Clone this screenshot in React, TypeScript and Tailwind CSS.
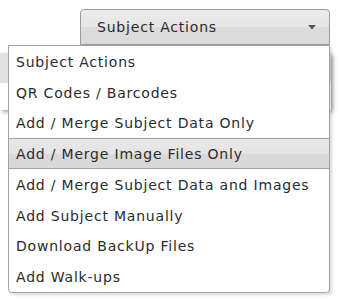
import React from "react";

const items = [
  "Subject Actions",
  "QR Codes / Barcodes",
  "Add / Merge Subject Data Only",
  "Add / Merge Image Files Only",
  "Add / Merge Subject Data and Images",
  "Add Subject Manually",
  "Download BackUp Files",
  "Add Walk-ups",
];

export default function App() {
  return (
    <div
      className="relative w-[341px] h-[301px] bg-white overflow-hidden text-[14px] tracking-[0.8px] text-[#2b2b2b]"
      style={{ fontFamily: '"DejaVu Sans", Verdana, sans-serif' }}
    >
      {/* element behind the menu */}
      <div className="absolute left-0 top-[53px] w-[331px] h-[57px] shadow-[2px_2px_4px_rgba(0,0,0,0.35)] bg-white">
        <div className="h-[30px] bg-[#e2e2e2]" />
      </div>

      <div className="relative pt-[9px] pl-[8px] w-[330px] flex flex-col items-end">
        <button className="w-[250px] h-[36px] border border-[#9c9c9c] rounded-t-[4px] bg-[linear-gradient(#ebebeb_0%,#e6e6e6_50%,#dcdcdc_51%,#dadada_100%)] flex items-center pl-[16px] pr-[13px] pt-[1px] text-[#2b2b2b] tracking-[0.8px]">
          <span className="flex-1 text-left">Subject Actions</span>
          <svg width="8" height="5" viewBox="0 0 8 5">
            <path d="M0 0 L8 0 L4 4.5 Z" fill="#555" />
          </svg>
        </button>
        <div className="w-[322px] border border-[#a3a3a3] rounded-b-[4px] bg-white shadow-[2px_2px_3px_rgba(0,0,0,0.15)]">
          {items.map((t, i) =>
            i === 3 ? (
              <div
                key={t}
                className="h-[31px] border-y border-[#a3a3a3] bg-[linear-gradient(#e8e8e8_0%,#e4e4e4_50%,#dadada_51%,#d8d8d8_100%)] flex items-center pl-[7px] pt-[1px]"
              >
                {t}
              </div>
            ) : (
              <div key={t} className="h-[30.7px] flex items-center pl-[7px] pt-[2px]">
                {t}
              </div>
            )
          )}
        </div>
      </div>
    </div>
  );
}
